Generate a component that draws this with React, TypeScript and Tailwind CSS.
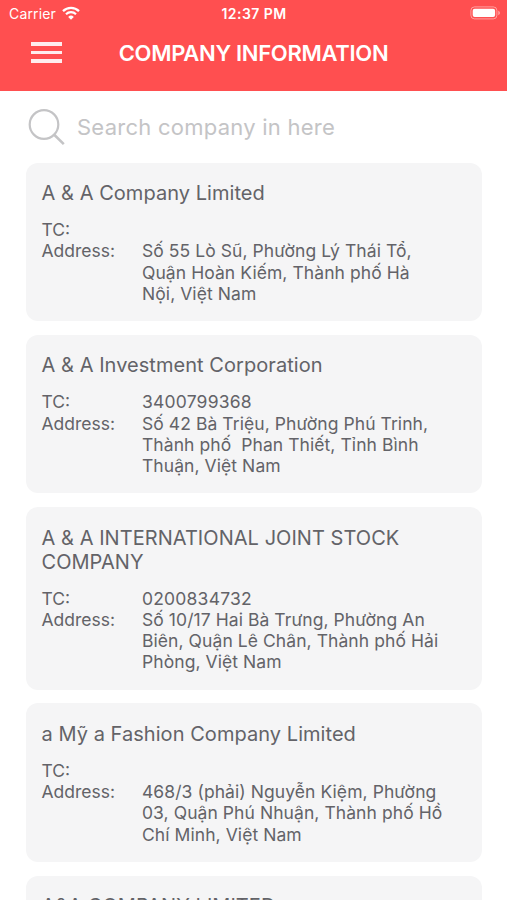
import { useState } from "react";

type Company = {
  name: string;
  taxCode: string;
  address: string[];
};

const companies: Company[] = [
  {
    name: "A & A Company Limited",
    taxCode: "",
    address: [
      "Số 55 Lò Sũ, Phường Lý Thái Tổ,",
      "Quận Hoàn Kiếm, Thành phố Hà",
      "Nội, Việt Nam",
    ],
  },
  {
    name: "A & A Investment Corporation",
    taxCode: "3400799368",
    address: [
      "Số 42 Bà Triệu, Phường Phú Trinh,",
      "Thành phố  Phan Thiết, Tỉnh Bình",
      "Thuận, Việt Nam",
    ],
  },
  {
    name: "A & A INTERNATIONAL JOINT STOCK COMPANY",
    taxCode: "0200834732",
    address: [
      "Số 10/17 Hai Bà Trưng, Phường An",
      "Biên, Quận Lê Chân, Thành phố Hải",
      "Phòng, Việt Nam",
    ],
  },
  {
    name: "a Mỹ a Fashion Company Limited",
    taxCode: "",
    address: [
      "468/3 (phải) Nguyễn Kiệm, Phường",
      "03, Quận Phú Nhuận, Thành phố Hồ",
      "Chí Minh, Việt Nam",
    ],
  },
  {
    name: "A&A COMPANY LIMITED",
    taxCode: "",
    address: [],
  },
];

export default function App() {
  const [query, setQuery] = useState("");

  const visible = companies.filter((c) =>
    c.name.toLowerCase().includes(query.toLowerCase())
  );

  return (
    <div className="flex h-screen flex-col overflow-hidden bg-white font-['Inter','Liberation_Sans',sans-serif] text-[#636368]">
      <header className="h-[91px] shrink-0 bg-[#ff4f50] text-white">
        <StatusBar />
        <div className="grid h-[51px] grid-cols-[1fr_auto_1fr] items-center pl-[31px]">
          <button aria-label="Menu" className="mb-[2px] flex w-[31px] flex-col gap-[5px]">
            <span className="h-[4px] bg-white/90" />
            <span className="h-[3.5px] bg-white/90" />
            <span className="h-[4px] bg-white/90" />
          </button>
          <h1 className="-ml-[31px] text-[22px] font-semibold tracking-[-0.3px]">
            COMPANY INFORMATION
          </h1>
        </div>
      </header>

      <label className="flex h-[71.5px] shrink-0 items-center gap-3 pt-px pl-7">
        <SearchIcon />
        <input
          value={query}
          onChange={(e) => setQuery(e.target.value)}
          placeholder="Search company in here"
          className="min-w-0 flex-1 pt-px text-[22px] tracking-[0.25px] outline-none placeholder:text-[#c4c4c6]"
        />
      </label>

      <main className="flex flex-col gap-[13.5px] pr-[25px] pl-[26px]">
        {visible.map((company) => (
          <CompanyCard key={company.name} company={company} />
        ))}
      </main>
    </div>
  );
}

function StatusBar() {
  return (
    <div className="grid h-[28px] grid-cols-3 items-center pr-[6px] pb-px pl-[9px] text-[14px]">
      <div className="flex items-center gap-[6px]">
        <span className="tracking-[0.15px]">Carrier</span>
        <svg className="-mt-px" width="18" height="14" viewBox="0 0 18 14" fill="none" stroke="white">
          <path d="M1 5.1a11.6 11.6 0 0 1 16 0" strokeWidth="2.3" />
          <path d="M4 8.2a7.2 7.2 0 0 1 10 0" strokeWidth="2.2" />
          <path d="M9 13.8 6.2 10.9a4 4 0 0 1 5.6 0Z" fill="white" stroke="none" />
        </svg>
      </div>
      <span className="-ml-[2px] text-center font-semibold tracking-[0.45px]">12:37 PM</span>
      <svg className="-mt-px justify-self-end" width="31" height="14" viewBox="0 0 31 14">
        <rect x="0.9" y="0.9" width="26" height="12" rx="3.6" fill="none" stroke="white" strokeOpacity="0.45" />
        <rect x="2.7" y="2.7" width="22.4" height="8.4" rx="2" fill="white" />
        <path d="M28.3 4.8v4.4c1-.4 1.6-1.2 1.6-2.2s-.6-1.8-1.6-2.2Z" fill="white" fillOpacity="0.5" />
      </svg>
    </div>
  );
}

function SearchIcon() {
  return (
    <svg width="37" height="37" viewBox="0 0 37 37" fill="none" stroke="#c4c4c6" strokeWidth="2.2">
      <circle cx="16" cy="15.5" r="14.3" />
      <path d="m26.2 25.8 9.6 9.3" strokeWidth="2.6" />
    </svg>
  );
}

function CompanyCard({ company }: { company: Company }) {
  return (
    <article className="shrink-0 rounded-[12px] bg-[#f5f5f6] px-[15.5px] pt-[18.6px] pb-[17.3px]">
      <h2 className="mb-[13.8px] text-[20px] leading-[24.2px] tracking-[0.05px]">
        {company.name}
      </h2>
      <dl className="grid grid-cols-[100.5px_1fr] text-[17.5px] leading-[21.2px]">
        <dt>TC:</dt>
        <dd className="tracking-[0.2px]">{company.taxCode}</dd>
        <dt>Address:</dt>
        <dd className="tracking-[0.07px] whitespace-pre">
          {company.address.join("\n")}
        </dd>
      </dl>
    </article>
  );
}
